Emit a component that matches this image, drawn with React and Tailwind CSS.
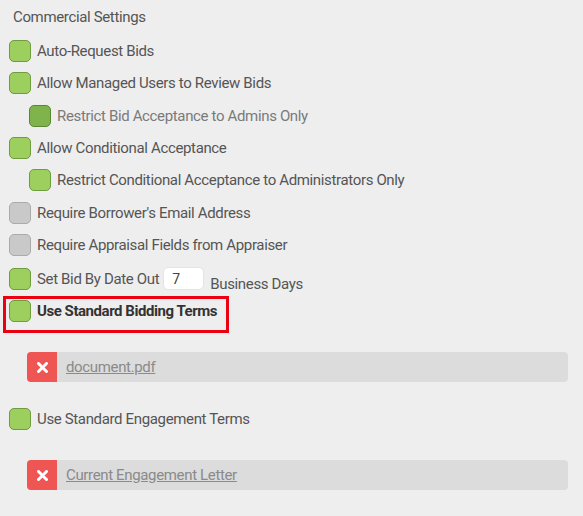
const Check = ({ tone = "on" }) => {
  const tones = {
    on: "bg-[#9ccf5e] border-[#6f9c3f]",
    dim: "bg-[#7fb34b] border-[#5b8733]",
    off: "bg-[#c9c9c9] border-[#ababab]",
  };
  return (
    <span
      className={`block w-[22px] h-[22px] shrink-0 rounded-[5px] border ${tones[tone]}`}
    />
  );
};

const Row = ({ tone, nested, muted, children }) => (
  <div
    className={`flex items-center h-[32.33px] gap-[6px] ${
      nested ? "pl-[29px]" : "pl-[9px]"
    }`}
  >
    <Check tone={tone} />
    <span className={muted ? "text-[#7a7a7a]" : ""}>{children}</span>
  </div>
);

const FileBar = ({ label }) => (
  <div className="ml-[27px] w-[541px] h-[30px] flex items-center rounded-[4px] bg-[#dcdcdc]">
    <span className="w-[30px] h-[30px] flex items-center justify-center rounded-l-[4px] bg-[#ef5552]">
      <svg width="11" height="11" viewBox="0 0 11 11">
        <path
          d="M1.5 1.5 L9.5 9.5 M9.5 1.5 L1.5 9.5"
          stroke="#fff"
          strokeWidth="3"
          strokeLinecap="round"
        />
      </svg>
    </span>
    <a href="#" className="pl-[9px] text-[#8a8a8a] underline">
      {label}
    </a>
  </div>
);

export default function App() {
  return (
    <div className="w-[583px] min-h-[516px] bg-[#eeeeee] font-['Roboto',sans-serif] text-[15px] tracking-[-0.35px] text-[#555]">
      <div className="h-[35px] flex items-center pl-[13px]">
        Commercial Settings
      </div>

      <Row tone="on">Auto-Request Bids</Row>
      <Row tone="on">Allow Managed Users to Review Bids</Row>
      <Row tone="dim" nested muted>
        Restrict Bid Acceptance to Admins Only
      </Row>
      <Row tone="on">Allow Conditional Acceptance</Row>
      <Row tone="on" nested>
        Restrict Conditional Acceptance to Administrators Only
      </Row>
      <Row tone="off">Require Borrower's Email Address</Row>
      <Row tone="off">Require Appraisal Fields from Appraiser</Row>

      <div className="flex items-center h-[35px] pl-[9px]">
        <Check tone="on" />
        <span className="ml-[6px]">Set Bid By Date Out</span>
        <input
          defaultValue="7"
          className="ml-[4px] w-[41px] h-[23px] rounded-[5px] bg-white border border-[#e4e4e4] px-[8px] text-[14px] text-[#444] outline-none"
        />
        <span className="ml-[6px] mt-[11px]">Business Days</span>
      </div>

      <div className="ml-[3px] w-[226px] h-[37px] border-[3px] border-[#ea0012] pl-[3px] pt-[1px]">
        <div className="flex items-center gap-[6px] h-[22px]">
          <Check tone="on" />
          <span className="font-bold text-[#333] tracking-[-0.45px]">
            Use Standard Bidding Terms
          </span>
        </div>
      </div>

      <div className="mt-[19px]">
        <FileBar label="document.pdf" />
      </div>

      <div className="mt-[26px] flex items-center gap-[6px] h-[22px] pl-[9px]">
        <Check tone="on" />
        <span>Use Standard Engagement Terms</span>
      </div>

      <div className="mt-[30px]">
        <FileBar label="Current Engagement Letter" />
      </div>
    </div>
  );
}
